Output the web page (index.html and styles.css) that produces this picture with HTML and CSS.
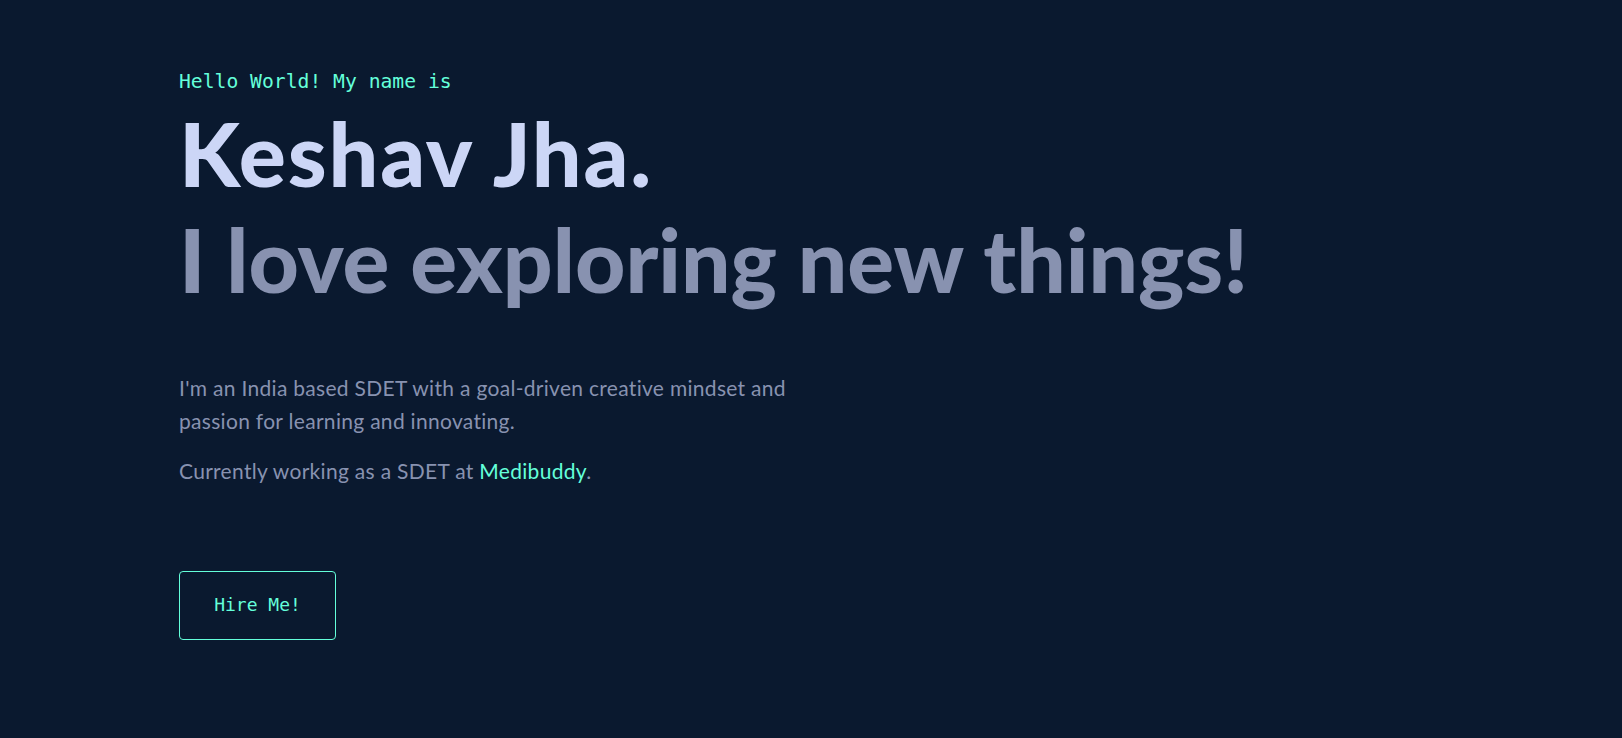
FILE: index.html
```html
<!DOCTYPE html>
<html lang="en">
<head>
<meta charset="utf-8">
<title>Keshav Jha</title>
<link rel="stylesheet" href="styles.css">
</head>
<body>
<main class="hero">
  <p class="intro">Hello World! My name is</p>
  <h1 class="name">Keshav Jha.</h1>
  <h2 class="tagline">I love exploring new things!</h2>
  <div class="about">
    <p>I'm an India based SDET with a goal-driven creative mindset and passion for learning and innovating.</p>
    <p>Currently working as a SDET at <a class="link" href="#">Medibuddy</a>.</p>
  </div>
  <a class="btn" href="#">Hire Me!</a>
</main>
</body>
</html>
```

FILE: styles.css
```css
html, body {
  margin: 0;
  padding: 0;
  background: #0a192f;
}

body {
  min-height: 738px;
  font-family: "Lato", "Liberation Sans", sans-serif;
  color: #8892b0;
}

.hero {
  display: flex;
  flex-direction: column;
  align-items: flex-start;
  padding: 71px 0 0 179px;
}

.intro {
  margin: 0 0 12px 0;
  font-family: "DejaVu Sans Mono", "Liberation Mono", monospace;
  font-size: 19.7px;
  line-height: 22px;
  color: #64ffda;
}

.name {
  margin: 0;
  font-size: 88px;
  font-weight: 900;
  line-height: 1.1;
  letter-spacing: 1.8px;
  color: #ccd6f6;
}

.tagline {
  margin: 10px 0 0 0;
  font-size: 87.4px;
  font-weight: 900;
  line-height: 1.1;
  color: #8892b0;
}

.about {
  display: flex;
  flex-direction: column;
  gap: 17px;
  max-width: 640px;
  margin-top: 63px;
}

.about p {
  margin: 0;
  font-size: 21px;
  line-height: 33px;
  letter-spacing: 0.3px;
  color: #8892b0;
}

.link {
  color: #64ffda;
  text-decoration: none;
}

.btn {
  display: inline-flex;
  align-items: center;
  justify-content: center;
  box-sizing: border-box;
  width: 157px;
  height: 69px;
  margin-top: 84px;
  border: 1px solid #64ffda;
  border-radius: 4px;
  font-family: "DejaVu Sans Mono", "Liberation Mono", monospace;
  font-size: 18px;
  line-height: 1;
  color: #64ffda;
  text-decoration: none;
}
```
